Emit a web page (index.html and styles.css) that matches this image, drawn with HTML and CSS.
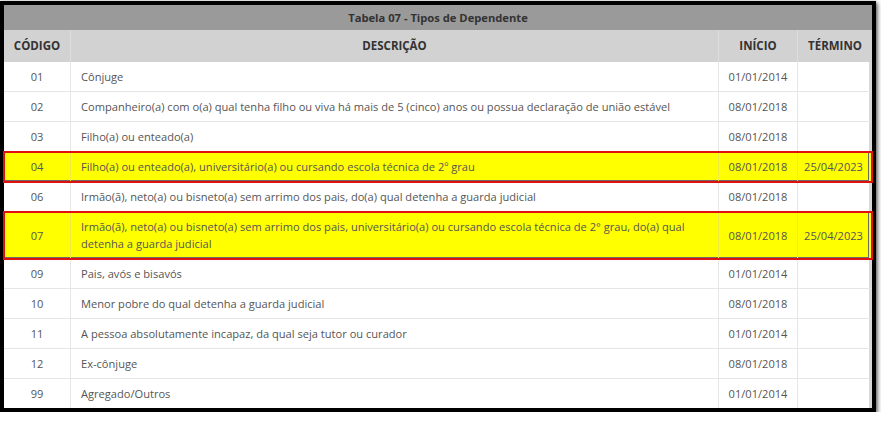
FILE: index.html
```html
<!DOCTYPE html>
<html lang="pt">
<head>
<meta charset="utf-8">
<link rel="stylesheet" href="styles.css">
</head>
<body>
<div class="frame">
  <div class="title">Tabela 07 - Tipos de Dependente</div>
  <div class="row head">
    <div class="c">CÓDIGO</div>
    <div class="c">DESCRIÇÃO</div>
    <div class="c">INÍCIO</div>
    <div class="c">TÉRMINO</div>
  </div>
  <div class="row"><div class="c">01</div><div class="d">Cônjuge</div><div class="c">01/01/2014</div><div class="c"></div></div>
  <div class="row"><div class="c">02</div><div class="d">Companheiro(a) com o(a) qual tenha filho ou viva há mais de 5 (cinco) anos ou possua declaração de união estável</div><div class="c">08/01/2018</div><div class="c"></div></div>
  <div class="row"><div class="c">03</div><div class="d">Filho(a) ou enteado(a)</div><div class="c">08/01/2018</div><div class="c"></div></div>
  <div class="row hl"><div class="c">04</div><div class="d">Filho(a) ou enteado(a), universitário(a) ou cursando escola técnica de 2º grau</div><div class="c">08/01/2018</div><div class="c">25/04/2023</div></div>
  <div class="row"><div class="c">06</div><div class="d">Irmão(ã), neto(a) ou bisneto(a) sem arrimo dos pais, do(a) qual detenha a guarda judicial</div><div class="c">08/01/2018</div><div class="c"></div></div>
  <div class="row hl"><div class="c">07</div><div class="d">Irmão(ã), neto(a) ou bisneto(a) sem arrimo dos pais, universitário(a) ou cursando escola técnica de 2° grau, do(a) qual detenha a guarda judicial</div><div class="c">08/01/2018</div><div class="c">25/04/2023</div></div>
  <div class="row"><div class="c">09</div><div class="d">Pais, avós e bisavós</div><div class="c">01/01/2014</div><div class="c"></div></div>
  <div class="row"><div class="c">10</div><div class="d">Menor pobre do qual detenha a guarda judicial</div><div class="c">08/01/2018</div><div class="c"></div></div>
  <div class="row"><div class="c">11</div><div class="d">A pessoa absolutamente incapaz, da qual seja tutor ou curador</div><div class="c">01/01/2014</div><div class="c"></div></div>
  <div class="row"><div class="c">12</div><div class="d">Ex-cônjuge</div><div class="c">08/01/2018</div><div class="c"></div></div>
  <div class="row last"><div class="c">99</div><div class="d">Agregado/Outros</div><div class="c">01/01/2014</div><div class="c"></div></div>
</div>
</body>
</html>
```
FILE: styles.css
```css
html, body {
  margin: 0;
  padding: 0;
  background: #ffffff;
}
body {
  padding-top: 1px;
  font-family: "Open Sans", "Noto Sans", sans-serif;
  font-size: 11.1px;
  color: #555;
}
.frame {
  width: 868px;
  border: 4px solid #000;
  background: #fff;
  box-shadow: 2px 2px 4px rgba(0, 0, 0, 0.55), 0 0 2px rgba(0, 0, 0, 0.25);
}
.title {
  height: 25px;
  line-height: 25px;
  background: #9a9a9a;
  color: #333;
  font-weight: 700;
  font-size: 11.2px;
  text-align: center;
}
.row {
  display: grid;
  grid-template-columns: 66px 648px 79px 1fr;
  border-bottom: 1px solid #e6e6e6;
  border-right: 3px solid #d8d8d8;
}
.row > div {
  padding: 6px 10px;
  line-height: 17px;
  border-left: 1px solid #e6e6e6;
}
.row > div:first-child {
  border-left: none;
}
.row .c {
  text-align: center;
  display: flex;
  align-items: center;
  justify-content: center;
  padding-left: 2px;
  padding-right: 2px;
}
.row .d {
  display: flex;
  align-items: center;
}
.head {
  background: #d2d2d2;
  color: #333;
  font-weight: 700;
  font-size: 11.5px;
  border-bottom: none;
  border-right: none;
}
.head > div {
  padding: 7px 4px 6px;
  line-height: 18px;
  border-left: 1px solid #dedede;
}
.row.head > div {
  padding-top: 7px;
  padding-bottom: 7px;
}
.last {
  border-bottom: none;
}
.hl {
  background: #ffff00;
  outline: 2px solid #e01010;
  outline-offset: -1px;
  box-shadow: inset 1px 0 0 #6a6a6a, inset -1px -1px 0 #6a6a6a;
  border-right-color: #ffff00;
}
.hl > div {
  border-left-color: #ecec40;
}
```
